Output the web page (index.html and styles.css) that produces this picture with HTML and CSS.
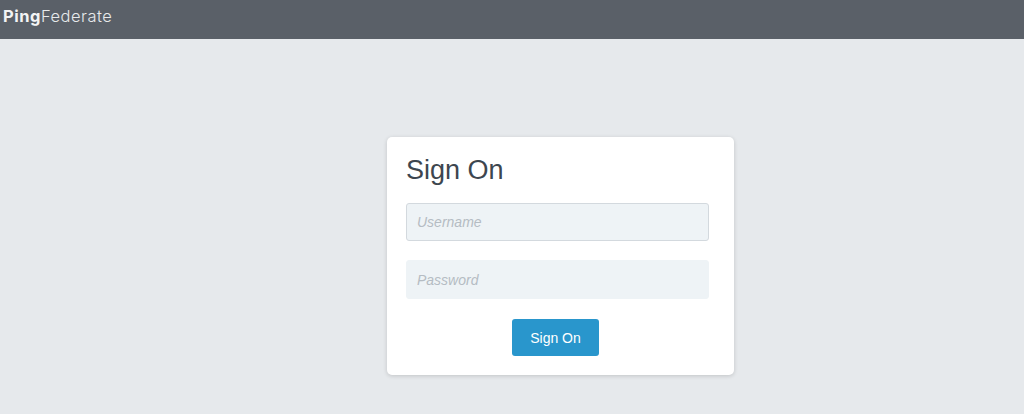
FILE: index.html
```html
<!DOCTYPE html>
<html lang="en">
<head>
<meta charset="utf-8">
<title>Sign On</title>
<link rel="stylesheet" href="styles.css">
</head>
<body>
<header class="topbar">
  <div class="brand"><span class="brand-bold">Ping</span><span class="brand-light">Federate</span></div>
</header>
<main class="stage">
  <form class="card">
    <h1 class="title">Sign On</h1>
    <input class="field field-user" type="text" placeholder="Username">
    <input class="field field-pass" type="password" placeholder="Password">
    <div class="actions">
      <button class="btn" type="button">Sign On</button>
    </div>
  </form>
</main>
</body>
</html>
```
FILE: styles.css
```css
html, body {
  margin: 0;
  padding: 0;
}
body {
  background: #e6e9ec;
  font-family: "Liberation Sans", Arial, sans-serif;
  height: 414px;
  overflow: hidden;
}
.topbar {
  height: 39px;
  background: #5a6068;
  display: flex;
  align-items: flex-start;
  padding: 0 0 0 3px;
}
.brand {
  font-family: "Inter", "Liberation Sans", sans-serif;
  font-size: 16.5px;
  line-height: 20px;
  margin-top: 6px;
  color: #f3f4f5;
  letter-spacing: 0.5px;
}
.brand-bold {
  font-weight: 700;
}
.brand-light {
  font-weight: 300;
  color: #e8eaec;
}
.stage {
  display: flex;
  padding: 98px 0 0 387px;
}
.card {
  width: 347px;
  box-sizing: border-box;
  background: #ffffff;
  border-radius: 5px;
  box-shadow: 0 1px 4px rgba(0, 0, 0, 0.16);
  padding: 17px 25px 19px 19px;
  display: flex;
  flex-direction: column;
}
.title {
  margin: 0 0 17px 0;
  font-size: 27px;
  line-height: 32px;
  font-weight: 400;
  color: #3d464f;
}
.field {
  width: 303px;
  height: 38px;
  box-sizing: border-box;
  background: #eef3f6;
  border: 1px solid #eef3f6;
  border-radius: 3px;
  padding: 0 10px;
  font-family: "Liberation Sans", Arial, sans-serif;
  font-size: 14px;
  color: #3d464f;
  outline: none;
}
.field::placeholder {
  color: #b5bcc3;
  font-style: italic;
}
.field-user {
  border-color: #d3d9de;
  margin-bottom: 19px;
}
.field-pass {
  height: 39px;
  margin-bottom: 20px;
}
.actions {
  display: flex;
  justify-content: center;
  padding-right: 4px;
}
.btn {
  width: 87px;
  height: 37px;
  background: #2996cc;
  color: #ffffff;
  border: none;
  border-radius: 3px;
  font-family: "Liberation Sans", Arial, sans-serif;
  font-size: 14px;
  padding: 0;
}
```
